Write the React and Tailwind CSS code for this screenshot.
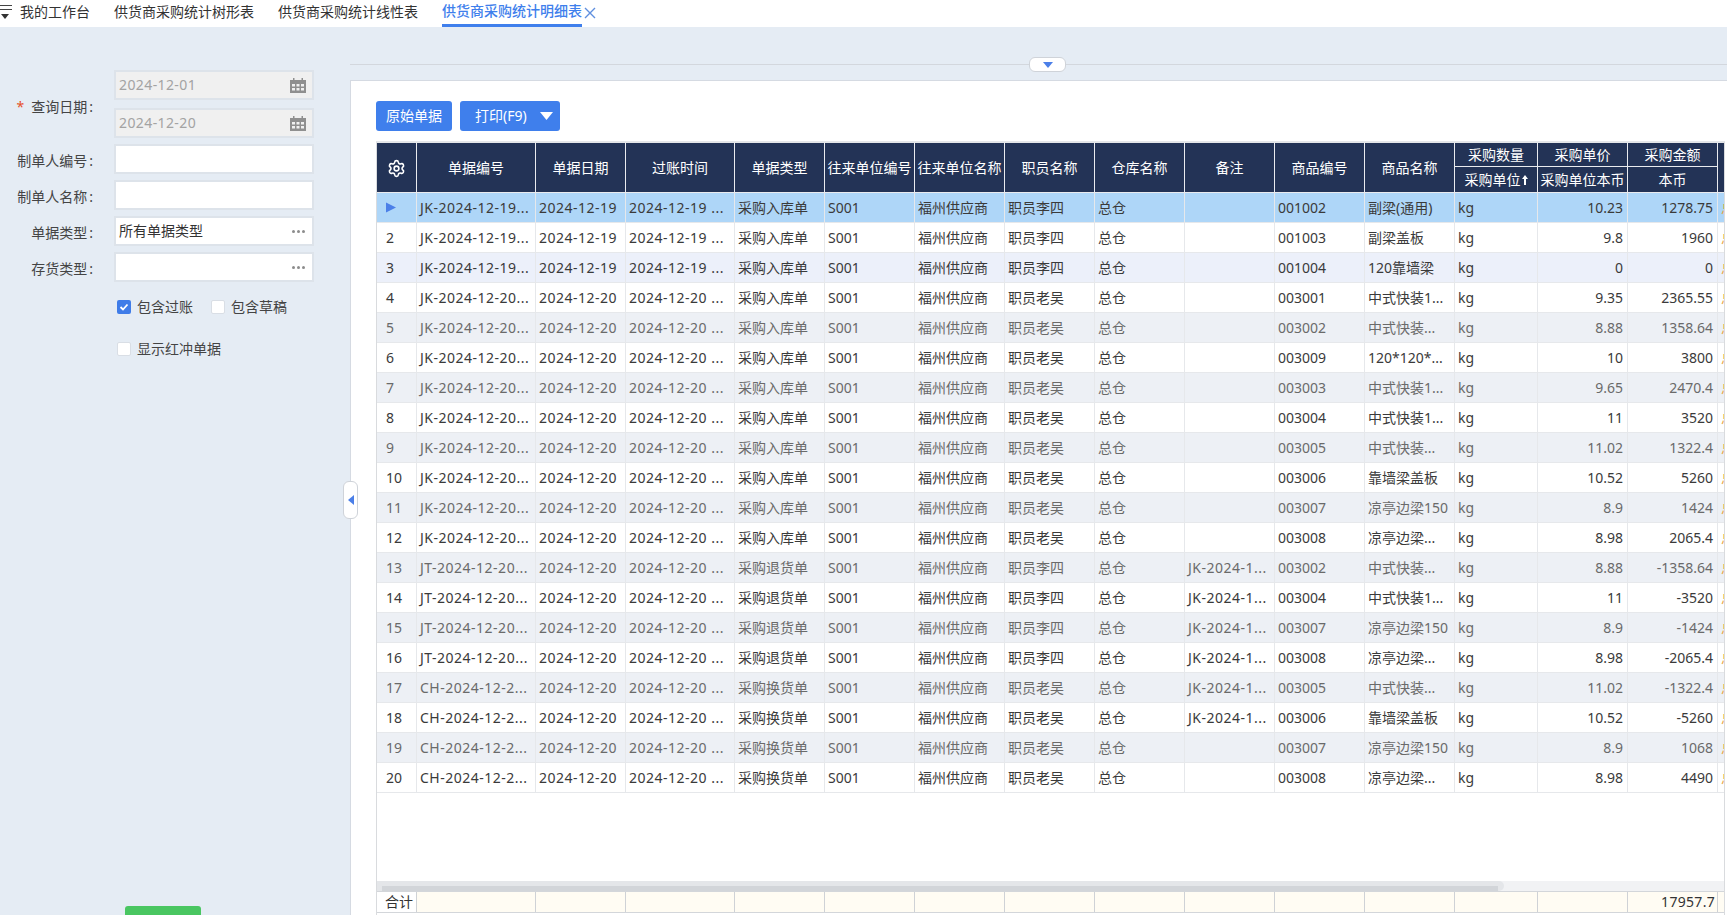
import React from "react";
import { Settings } from "lucide-react";

const W = [40, 119, 90, 109, 90, 90, 90, 90, 90, 90, 90, 90, 83, 90, 90];
const D = { j19: "JK-2024-12-19...", j20: "JK-2024-12-20...", t: "JT-2024-12-20...", c: "CH-2024-12-2..." };
const mk = (no, date, time, type, emp, rem, code, name, price, amt) => [no, date, time, type, "S001", "福州供应商", emp, "总仓", rem, code, name, "kg", price, amt];
const d19 = ["2024-12-19", "2024-12-19 ..."];
const d20 = ["2024-12-20", "2024-12-20 ..."];
const IN = "采购入库单", OUT = "采购退货单", EX = "采购换货单", L = "职员李四", W2 = "职员老吴", R = "JK-2024-1...";
const rows = [
  mk(D.j19, ...d19, IN, L, "", "001002", "副梁(通用)", "10.23", "1278.75"),
  mk(D.j19, ...d19, IN, L, "", "001003", "副梁盖板", "9.8", "1960"),
  mk(D.j19, ...d19, IN, L, "", "001004", "120靠墙梁", "0", "0"),
  mk(D.j20, ...d20, IN, W2, "", "003001", "中式快装1...", "9.35", "2365.55"),
  mk(D.j20, ...d20, IN, W2, "", "003002", "中式快装...", "8.88", "1358.64"),
  mk(D.j20, ...d20, IN, W2, "", "003009", "120*120*...", "10", "3800"),
  mk(D.j20, ...d20, IN, W2, "", "003003", "中式快装1...", "9.65", "2470.4"),
  mk(D.j20, ...d20, IN, W2, "", "003004", "中式快装1...", "11", "3520"),
  mk(D.j20, ...d20, IN, W2, "", "003005", "中式快装...", "11.02", "1322.4"),
  mk(D.j20, ...d20, IN, W2, "", "003006", "靠墙梁盖板", "10.52", "5260"),
  mk(D.j20, ...d20, IN, W2, "", "003007", "凉亭边梁150", "8.9", "1424"),
  mk(D.j20, ...d20, IN, W2, "", "003008", "凉亭边梁...", "8.98", "2065.4"),
  mk(D.t, ...d20, OUT, L, R, "003002", "中式快装...", "8.88", "-1358.64"),
  mk(D.t, ...d20, OUT, L, R, "003004", "中式快装1...", "11", "-3520"),
  mk(D.t, ...d20, OUT, L, R, "003007", "凉亭边梁150", "8.9", "-1424"),
  mk(D.t, ...d20, OUT, L, R, "003008", "凉亭边梁...", "8.98", "-2065.4"),
  mk(D.c, ...d20, EX, W2, R, "003005", "中式快装...", "11.02", "-1322.4"),
  mk(D.c, ...d20, EX, W2, R, "003006", "靠墙梁盖板", "10.52", "-5260"),
  mk(D.c, ...d20, EX, W2, "", "003007", "凉亭边梁150", "8.9", "1068"),
  mk(D.c, ...d20, EX, W2, "", "003008", "凉亭边梁...", "8.98", "4490"),
];
const heads = ["单据编号", "单据日期", "过账时间", "单据类型", "往来单位编号", "往来单位名称", "职员名称", "仓库名称", "备注", "商品编号", "商品名称"];

function Calendar() {
  return (
    <svg width="16" height="16" viewBox="0 0 16 16" className="shrink-0">
      <path d="M0 3h16v13H0z" fill="#8f8f8f" />
      <path d="M3 1h1.500v4H3zM11.500 1H13v4h-1.500z" fill="#8f8f8f" />
      <path d="M2 7h3v2.500H2zM6.500 7h3v2.500h-3zM11 7h3v2.500h-3zM2 11h3v2.500H2zM6.500 11h3v2.500h-3zM11 11h3v2.500h-3z" fill="#f0f0f0" />
    </svg>
  );
}
function Dots() {
  return (
    <span className="flex gap-[2px] shrink-0">
      <i className="w-[3px] h-[3px] rounded-full bg-[#8c8c8c]" />
      <i className="w-[3px] h-[3px] rounded-full bg-[#8c8c8c]" />
      <i className="w-[3px] h-[3px] rounded-full bg-[#8c8c8c]" />
    </span>
  );
}
function Box({ date, value, dots, className = "" }) {
  return (
    <div className={`w-[200px] h-[30px] border-2 border-[#dde3ea] flex items-center justify-between pl-[3px] pr-[6px] ${date ? "bg-[#f0f0f0] text-[#a3a3a3]" : "bg-white text-[#333]"} ${className}`}>
      <span className={date ? "tracking-[0.4px]" : ""}>{value}</span>
      {date && <Calendar />}
      {dots && <span className="pr-[1px]"><Dots /></span>}
    </div>
  );
}
function Field({ label, ...p }) {
  return (
    <div className="flex items-center">
      <span className="w-[93px] pt-[4px] text-right text-[#444] whitespace-nowrap">{label}<span className="ml-[2px]">:</span></span>
      <Box className="ml-[21px]" {...p} />
    </div>
  );
}
function Check({ on, label }) {
  return (
    <label className="flex items-center gap-[6px] text-[#444]">
      <span className={`w-[14px] h-[14px] rounded-[2px] flex items-center justify-center ${on ? "bg-[#3f7ce8]" : "bg-white border border-[#d9dee5]"}`}>
        {on && (
          <svg width="10" height="10" viewBox="0 0 10 10"><path d="M1.500 5l2.500 2.500L8.500 2.500" fill="none" stroke="#fff" strokeWidth="1.800" /></svg>
        )}
      </span>
      {label}
    </label>
  );
}
function Sidebar() {
  return (
    <aside className="w-[350px] shrink-0 pt-[43px] flex flex-col relative">
      <div className="flex items-center">
        <span className="w-[93px] pt-[6px] text-right text-[#444] whitespace-nowrap">
          <span className="text-[#e5512b] mr-[7px]">*</span>查询日期<span className="ml-[2px]">:</span>
        </span>
        <div className="ml-[21px] flex flex-col gap-[8px]">
          <Box date value="2024-12-01" />
          <Box date value="2024-12-20" />
        </div>
      </div>
      <div className="mt-[6px] flex flex-col gap-[6px]">
        <Field label="制单人编号" />
        <Field label="制单人名称" />
        <Field label="单据类型" value="所有单据类型" dots />
        <Field label="存货类型" dots />
      </div>
      <div className="ml-[117px] mt-[18px] flex gap-[18px]">
        <Check on label="包含过账" />
        <Check label="包含草稿" />
      </div>
      <div className="ml-[117px] mt-[28px]">
        <Check label="显示红冲单据" />
      </div>
      <div className="ml-[125px] mt-[550px] w-[76px] h-[30px] rounded-[3px] bg-[#49c661] shrink-0" />
    </aside>
  );
}
const SPACED = [0, 1, 2, 8];
function Row({ r, i }) {
  const selected = i === 0;
  const hover = i === 2;
  const gray = !selected && !hover && i % 2 === 0;
  const bg = selected ? "bg-[#aed6f8]" : hover ? "bg-[#ecf0fa]" : gray ? "bg-[#edf0f5]" : "bg-white";
  const color = gray ? "text-[#6a6a6a]" : "text-[#3a3a3a]";
  return (
    <div className={`flex h-[30px] border-b border-[#e6e8eb] ${bg} ${color}`}>
      <div className="w-[40px] shrink-0 border-r border-[#e6e8eb] pl-[9px] flex items-center">
        {selected ? (
          <svg width="11" height="11" viewBox="0 0 11 11"><path d="M0 0.500L10 5.500L0 10.500z" fill="#4b7fe8" /></svg>
        ) : (
          i + 1
        )}
      </div>
      {r.map((c, j) => (
        <div
          key={j}
          style={{ width: W[j + 1] }}
          className={`shrink-0 border-r border-[#e6e8eb] flex items-center overflow-hidden whitespace-nowrap ${j >= 12 ? "justify-end pr-[4px]" : "pl-[3px]"} ${SPACED.includes(j) ? "tracking-[0.5px]" : ""}`}
        >
          {c}
        </div>
      ))}
      <div className="w-[10px] shrink-0 pl-[3px] flex items-center overflow-hidden whitespace-nowrap text-[#e8a33d]">总</div>
    </div>
  );
}
function Head() {
  const cell = "shrink-0 h-full border-r border-[#e9ebef] flex items-center justify-center overflow-hidden whitespace-nowrap pt-[1px]";
  const stack = [
    ["采购数量", "采购单位"],
    ["采购单价", "采购单位本币"],
    ["采购金额", "本币"],
  ];
  return (
    <div className="flex h-[50px] shrink-0 bg-[#233356] text-white border-b border-[#e9ebef]">
      <div className={`${cell} w-[40px]`}>
        <Settings size={19} strokeWidth={2} />
      </div>
      {heads.map((h, i) => (
        <div key={h} style={{ width: W[i + 1] }} className={cell}>{h}</div>
      ))}
      {stack.map((s, i) => (
        <div key={s[0]} style={{ width: W[12 + i] }} className="shrink-0 h-full border-r border-[#e9ebef] flex flex-col">
          <div className="h-[24px] border-b border-[#e9ebef] flex items-center justify-center whitespace-nowrap">{s[0]}</div>
          <div className="flex-1 flex items-center justify-center whitespace-nowrap">
            {s[1]}
            {i === 0 && (
              <svg width="6" height="10" viewBox="0 0 6 10" className="ml-[1px]"><path d="M3 0L6 4H4v6H2V4H0z" fill="#fff" /></svg>
            )}
          </div>
        </div>
      ))}
    </div>
  );
}
function Footer() {
  return (
    <div className="flex h-[21px] shrink-0 bg-[#fffcf3] border-t border-[#d3d6da] text-[#333]">
      <div className="w-[40px] shrink-0 border-r border-[#cfd2d6] pl-[8px] flex items-center whitespace-nowrap bg-white">合计</div>
      {W.slice(1).map((w, i) => (
        <div key={i} style={{ width: w }} className="shrink-0 border-r border-[#cfd2d6] flex items-center justify-end pr-[2px] tracking-[0.3px]">
          {i === 13 ? "17957.7" : ""}
        </div>
      ))}
    </div>
  );
}
function Main() {
  return (
    <main className="flex-1 min-w-0 flex flex-col">
      <div className="h-[53px] shrink-0 relative">
        <div className="mt-[37px] h-px bg-[#d3d7dd]" />
        <div className="absolute left-[679px] top-[30px] w-[37px] h-[15px] bg-white border border-[#cfd3d9] rounded-[6px] flex items-center justify-center">
          <svg width="10" height="6" viewBox="0 0 10 6"><path d="M0 0h10L5 6z" fill="#4b7fe8" /></svg>
        </div>
      </div>
      <div className="flex-1 min-h-0 bg-white border-t border-l border-[#d5dae2] pl-[25px] pt-[20px] flex flex-col relative">
        <div className="absolute left-[-8px] top-[400px] w-[15px] h-[38px] bg-white border border-[#cfd3d9] rounded-[6px] flex items-center justify-center">
          <svg width="6" height="10" viewBox="0 0 6 10"><path d="M6 0v10L0 5z" fill="#4b7fe8" /></svg>
        </div>
        <div className="flex gap-[8px] shrink-0">
          <button className="w-[76px] h-[30px] rounded-[3px] bg-[#3f7fec] text-white">原始单据</button>
          <button className="w-[100px] h-[30px] rounded-[3px] bg-[#3f7fec] text-white flex items-center pl-[15px] gap-[13px]">
            打印(F9)
            <svg width="13" height="8" viewBox="0 0 13 8"><path d="M0 0h13L6.500 8z" fill="#fff" /></svg>
          </button>
        </div>
        <div className="mt-[10px] h-[774px] w-[1349px] shrink-0 overflow-hidden border-t-2 border-t-[#e4e6e9] border-l border-r border-[#d9dbde] flex flex-col">
          <Head />
          <div className="flex-1 min-h-0">
            {rows.map((r, i) => <Row key={i} r={r} i={i} />)}
          </div>
          <div className="h-[10px] shrink-0 bg-[#f1f2f4]">
            <div className="w-[1127px] h-full bg-[#e4e6e9] rounded-r-[5px] pt-[5px] pl-[5px] pr-[6px]">
              <div className="h-[5px] bg-[#d2d5d9]" />
            </div>
          </div>
          <Footer />
          <div className="h-[3px] shrink-0 border-t border-[#d3d6da]" />
        </div>
      </div>
    </main>
  );
}
export default function App() {
  return (
    <div className="w-[1727px] h-[915px] overflow-hidden flex flex-col bg-[#e5ecf4] text-[14px] leading-none font-['Noto_Sans','Noto_Sans_CJK_SC',sans-serif]">
      <header className="h-[27px] shrink-0 bg-white flex items-start text-[#333]">
        <svg width="14" height="20" viewBox="0 0 14 20" className="shrink-0 mt-[4px]">
          <path d="M0 1.500h12M0 5.500h12" stroke="#444" strokeWidth="1" fill="none" />
          <path d="M1 10h8l-4 5z" fill="#333" />
        </svg>
        <span className="ml-[6px] w-[70px] h-[24px] flex items-center whitespace-nowrap">我的工作台</span>
        <span className="ml-[24px] w-[140px] h-[24px] flex items-center whitespace-nowrap">供货商采购统计树形表</span>
        <span className="ml-[24px] w-[140px] h-[24px] flex items-center whitespace-nowrap">供货商采购统计线性表</span>
        <span className="ml-[24px] w-[140px] h-[27px] pb-[3px] border-b-[3px] border-[#3f7fec] text-[#3f7fec] font-medium flex items-center whitespace-nowrap">供货商采购统计明细表</span>
        <svg width="12" height="12" viewBox="0 0 12 12" className="ml-[2px] mt-[7px]">
          <path d="M1 1l10 10M11 1L1 11" stroke="#5f8fdf" strokeWidth="1.400" fill="none" />
        </svg>
      </header>
      <div className="flex-1 min-h-0 flex">
        <Sidebar />
        <Main />
      </div>
    </div>
  );
}
